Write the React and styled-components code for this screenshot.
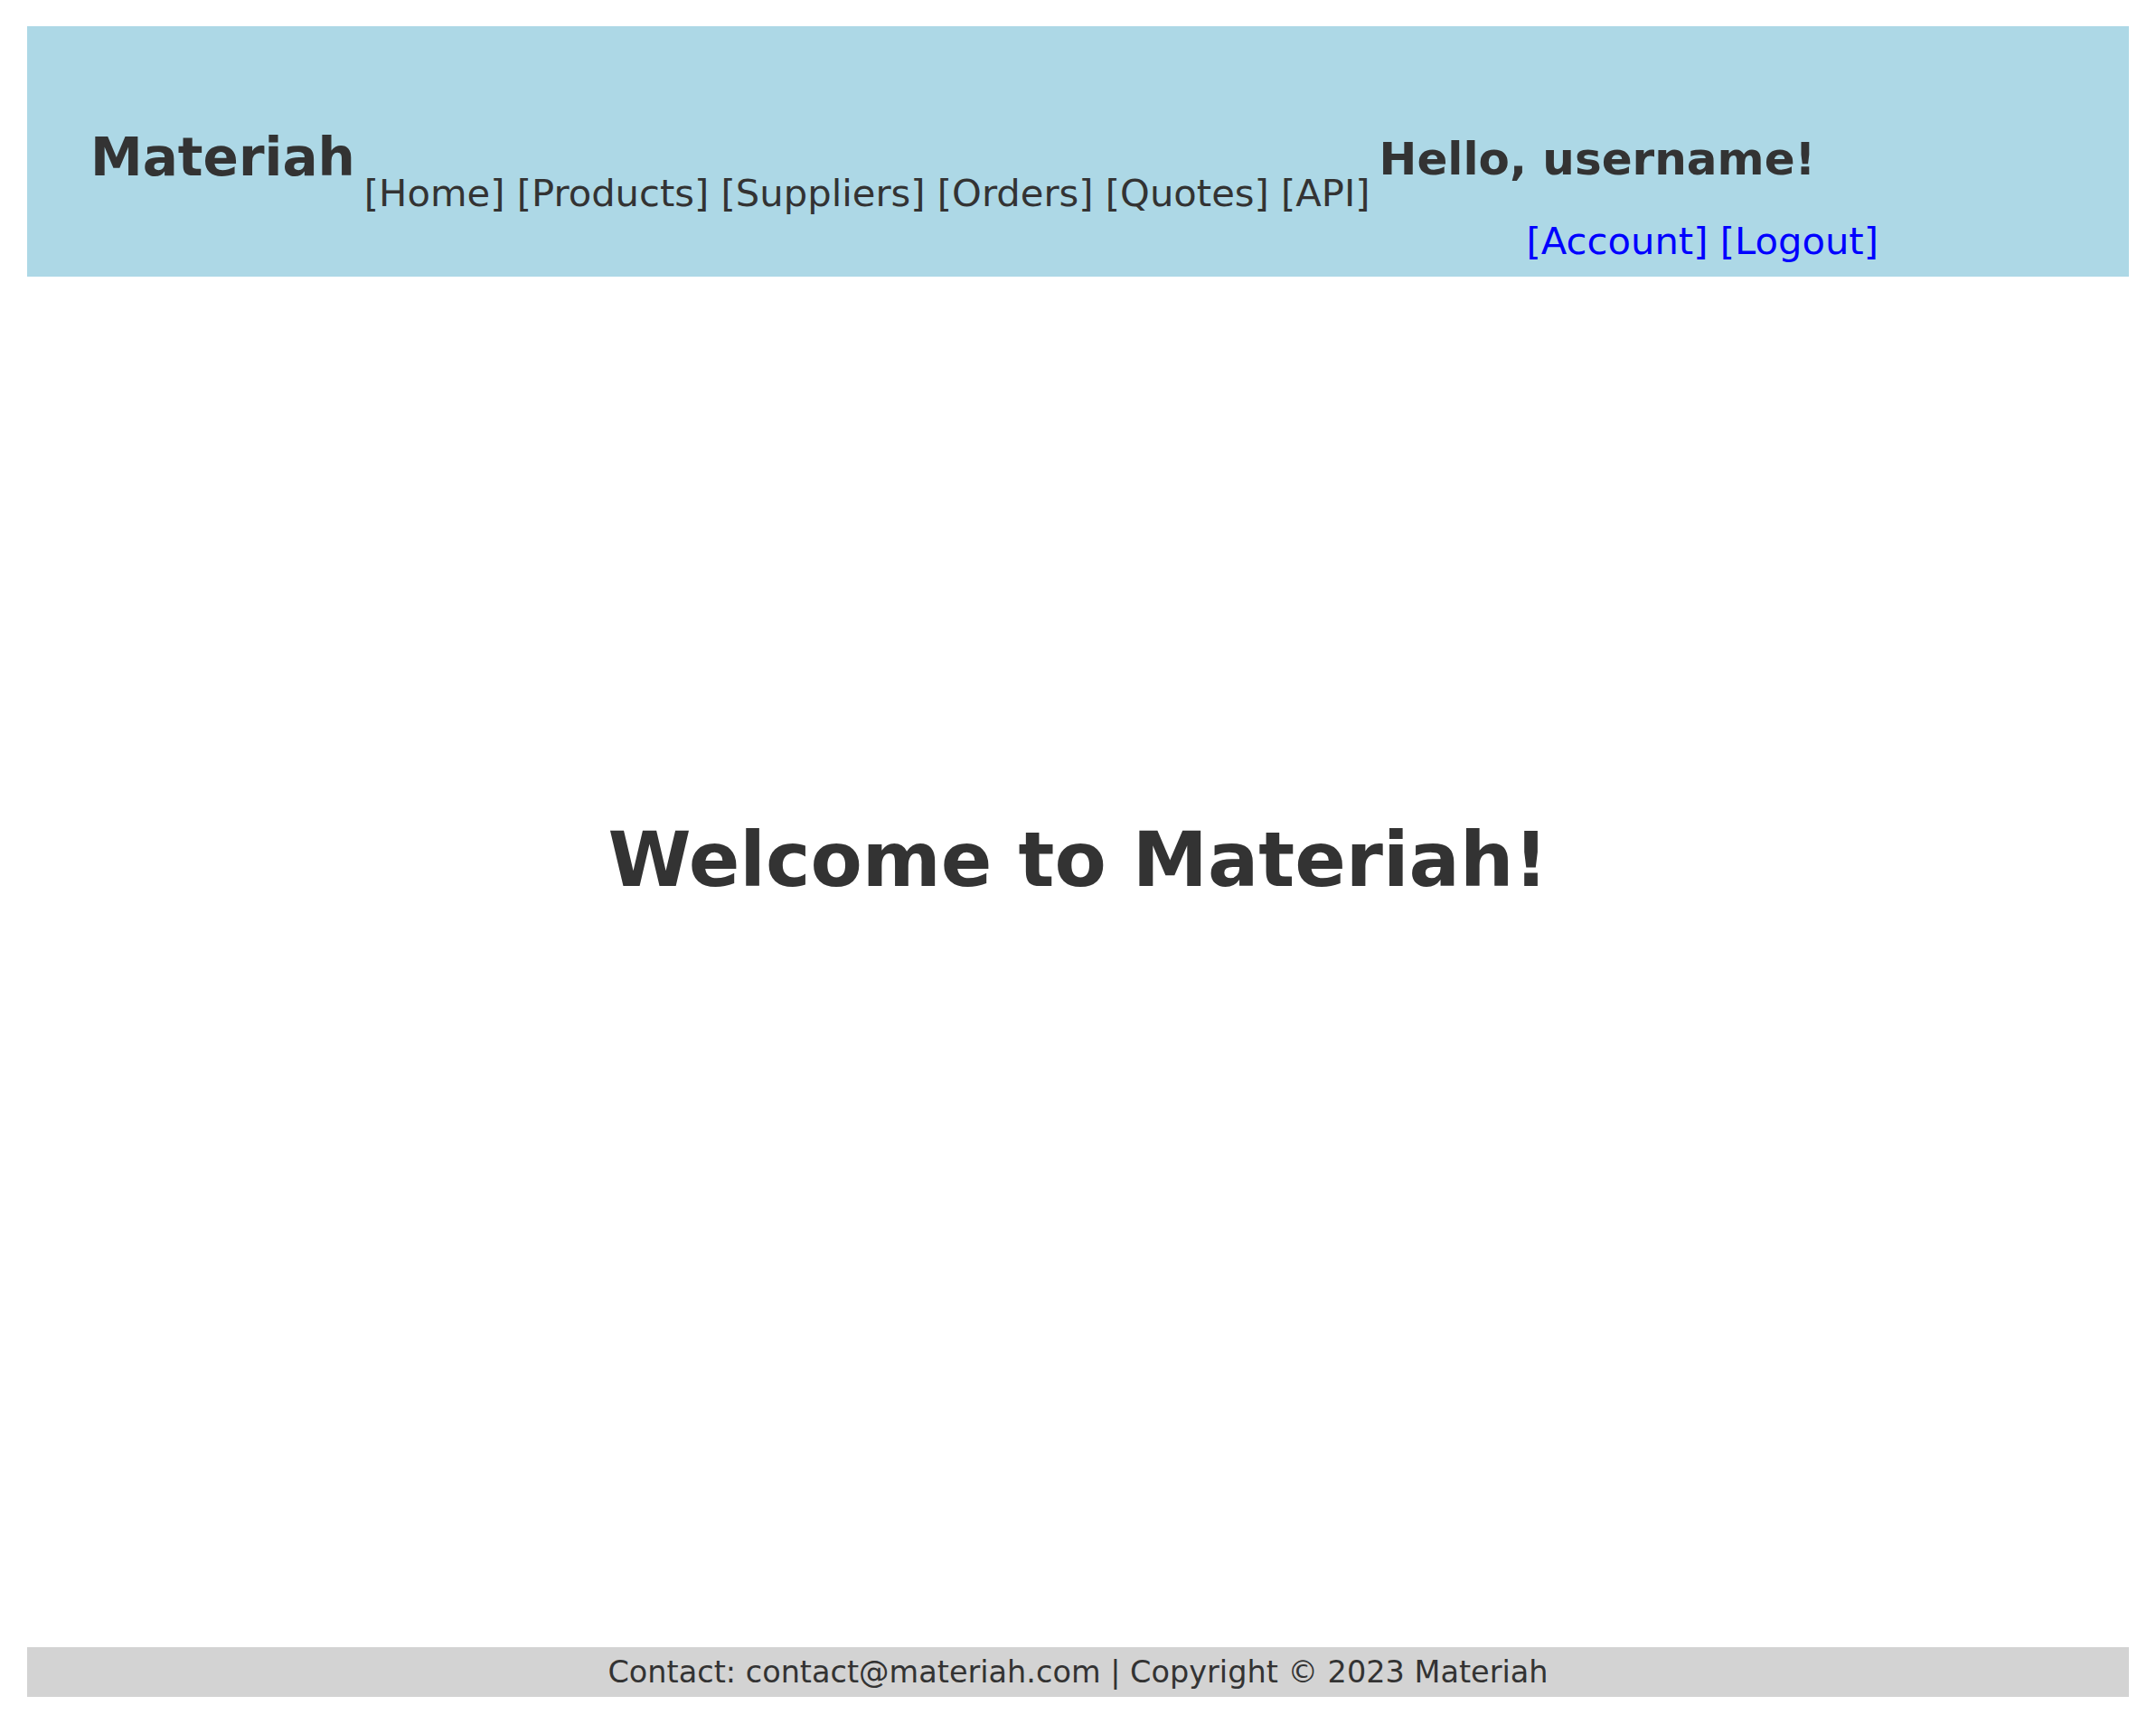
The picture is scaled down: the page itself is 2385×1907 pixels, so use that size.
import React from 'react';
import styled, { createGlobalStyle } from 'styled-components';

const GlobalStyle = createGlobalStyle`
  html, body {
    margin: 0;
    padding: 0;
    background: #fff;
  }
  body {
    font-family: "DejaVu Sans", Verdana, sans-serif;
    color: #333;
  }
`;

const Page = styled.div`
  display: flex;
  flex-direction: column;
  min-height: 100vh;
  box-sizing: border-box;
  padding: 29px 30px 30px;
`;

const Header = styled.header`
  display: flex;
  align-items: flex-start;
  gap: 10px;
  padding: 111px 70px 15px;
  background-color: #add8e6;
`;

const Brand = styled.h1`
  margin: 0;
  font-size: 58px;
  font-weight: bold;
  line-height: normal;
`;

const Nav = styled.nav`
  margin-top: 49px;
  font-size: 41.7px;
  line-height: normal;
  white-space: nowrap;
`;

const NavLink = styled.a`
  color: ${(p) => (p.$accent ? 'blue' : '#333')};
  text-decoration: none;
`;

const UserBox = styled.div`
  display: flex;
  flex-direction: column;
`;

const Greeting = styled.h2`
  margin: 7px 0 0;
  font-size: 50px;
  font-weight: bold;
  line-height: normal;
`;

const UserLinks = styled.div`
  margin: 37px 0 0 163px;
  font-size: 41.7px;
  line-height: normal;
  white-space: nowrap;
`;

const Main = styled.main`
  flex: 1;
  display: flex;
  align-items: center;
  justify-content: center;
  padding-bottom: 226px;
`;

const Title = styled.h1`
  margin: 0;
  font-size: 83.5px;
  font-weight: bold;
  line-height: normal;
`;

const Footer = styled.footer`
  padding: 8px;
  background-color: #d3d3d3;
  text-align: center;
  font-size: 33.5px;
  line-height: normal;
`;

const navItems = ['Home', 'Products', 'Suppliers', 'Orders', 'Quotes', 'API'];

const App = () => {
  return (
    <>
      <GlobalStyle />
      <Page>
        <Header>
          <Brand>Materiah</Brand>
          <Nav>
            {navItems.map((item, i) => (
              <React.Fragment key={item}>
                {i > 0 && ' '}
                <NavLink href="#">[{item}]</NavLink>
              </React.Fragment>
            ))}
          </Nav>
          <UserBox>
            <Greeting>Hello, username!</Greeting>
            <UserLinks>
              <NavLink $accent href="#">[Account]</NavLink>{' '}
              <NavLink $accent href="#">[Logout]</NavLink>
            </UserLinks>
          </UserBox>
        </Header>
        <Main>
          <Title>Welcome to Materiah!</Title>
        </Main>
        <Footer>Contact: contact@materiah.com | Copyright © 2023 Materiah</Footer>
      </Page>
    </>
  );
};

export default App;
